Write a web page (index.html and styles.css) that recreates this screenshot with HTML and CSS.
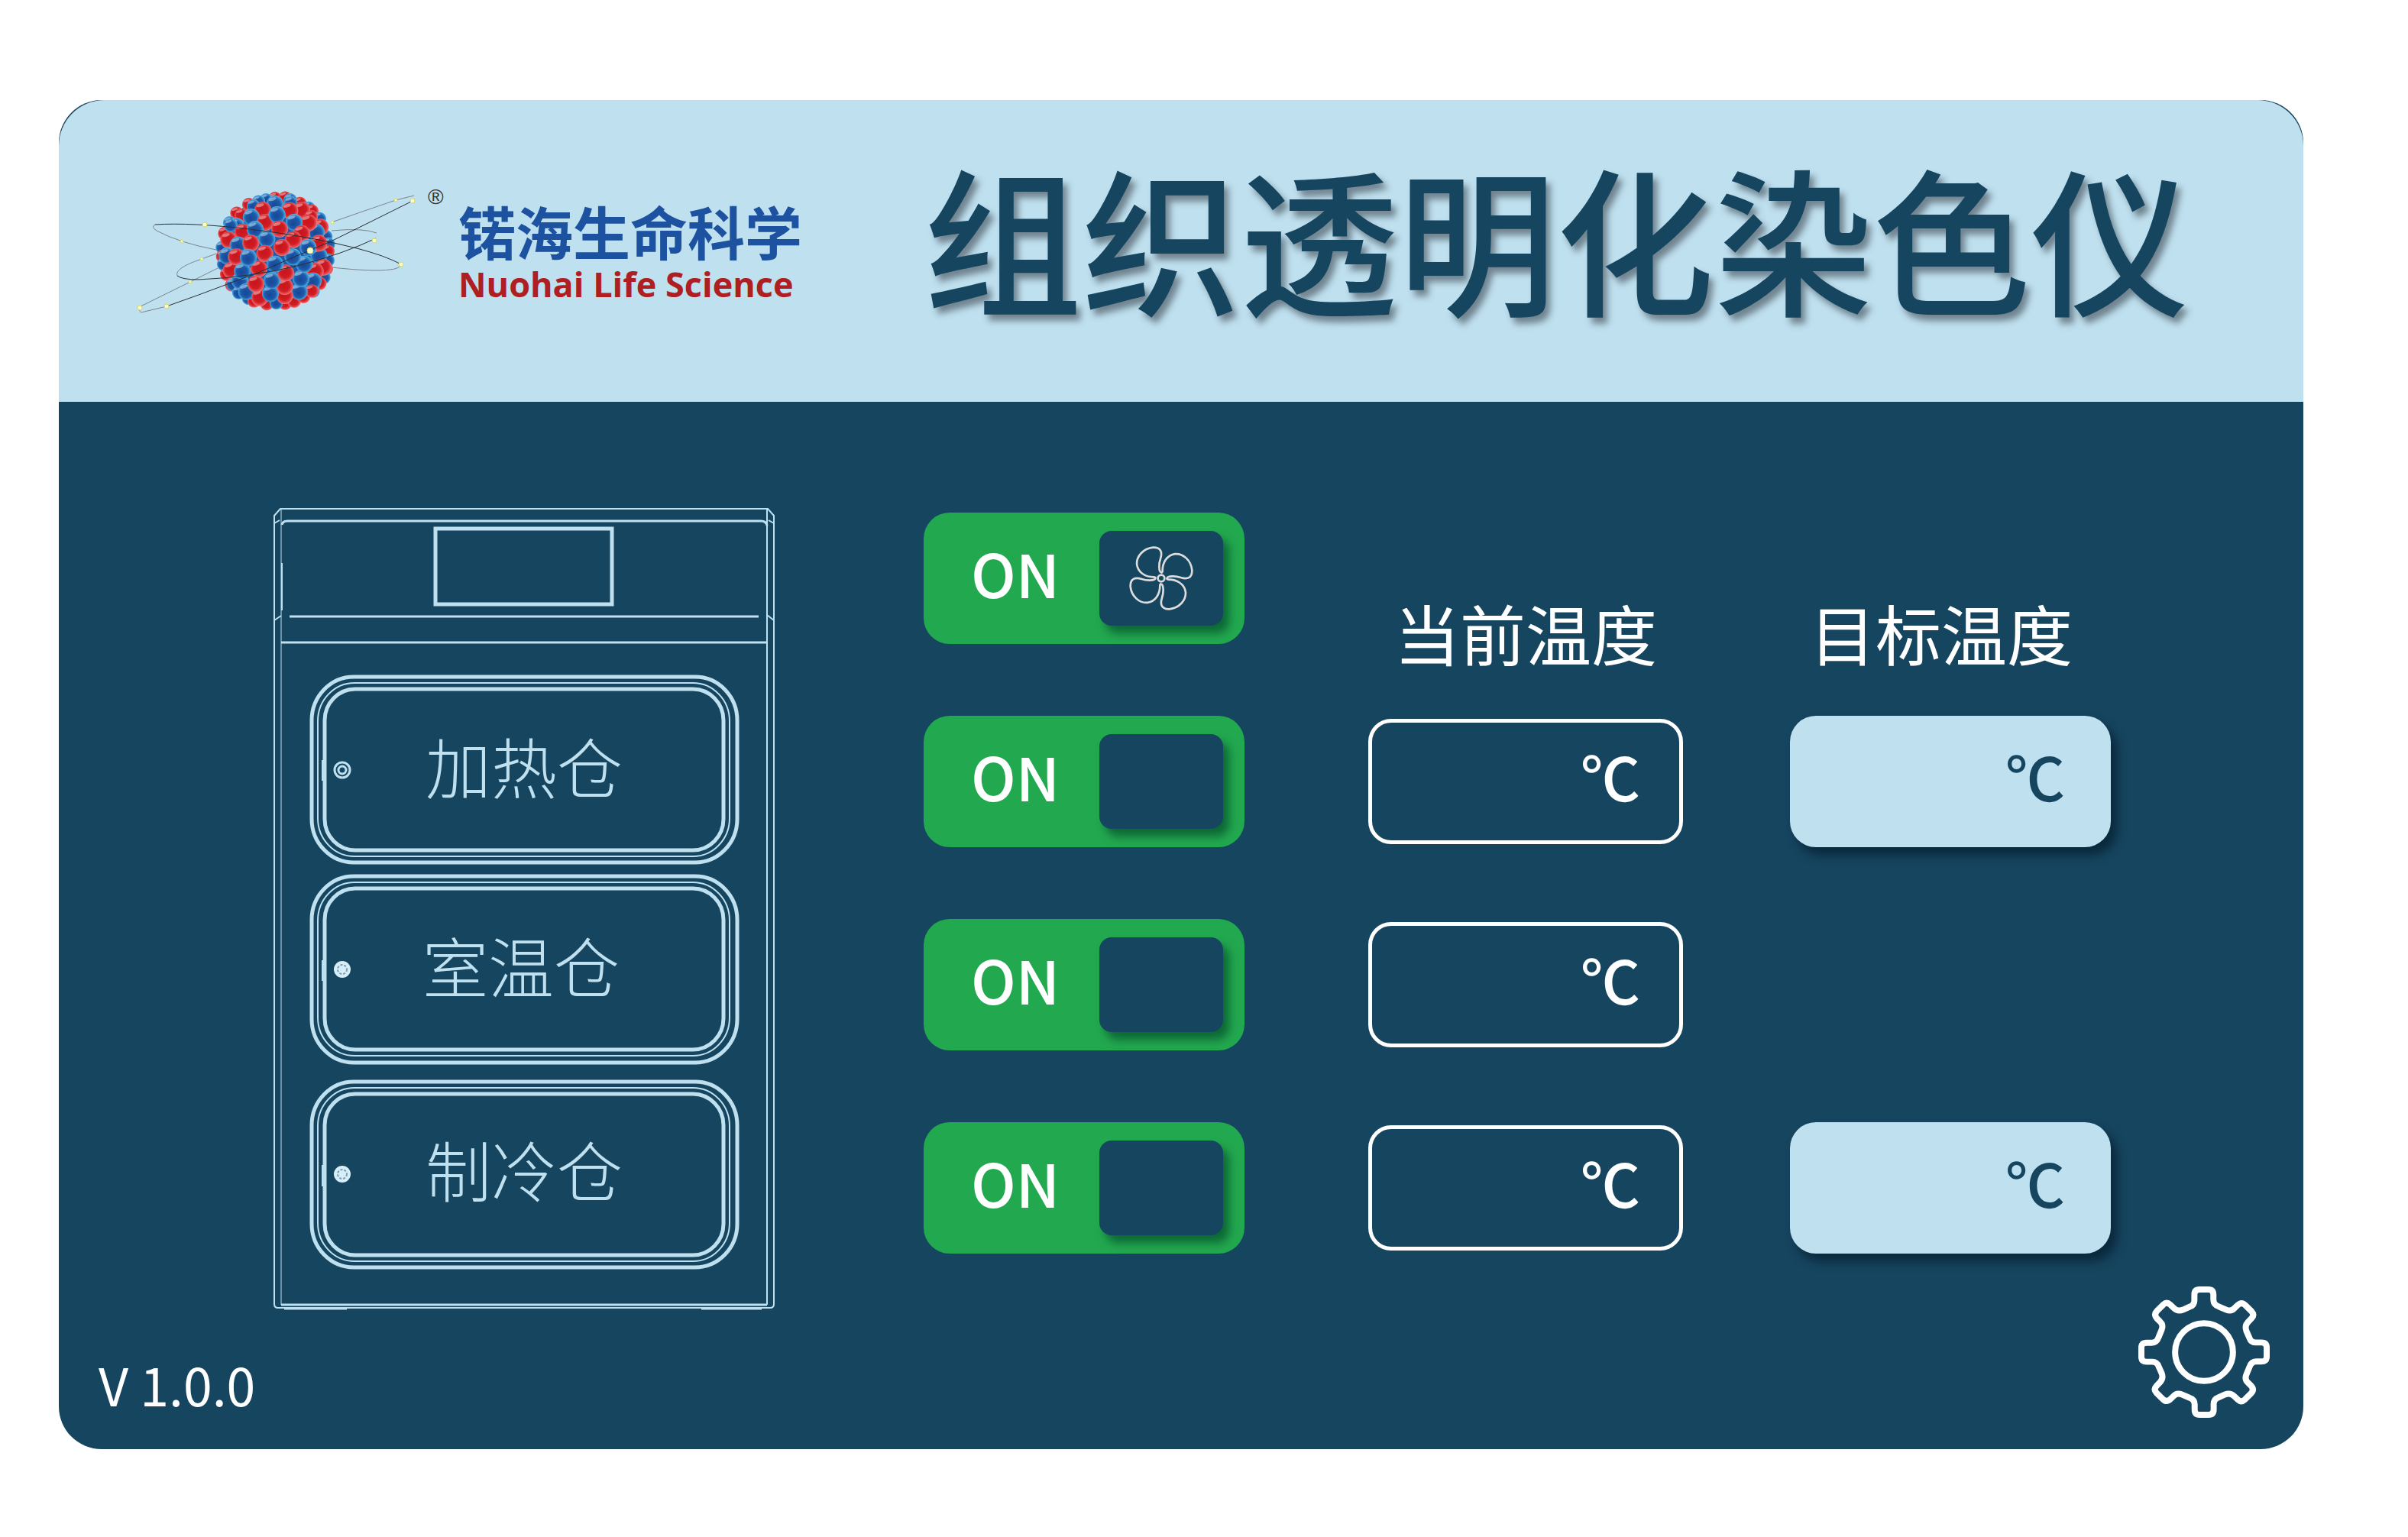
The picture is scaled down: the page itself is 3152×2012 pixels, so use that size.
FILE: index.html
```html
<!DOCTYPE html>
<html lang="zh-CN">
<head>
    <meta charset="utf-8">
    <title>组织透明化染色仪</title>
    <link rel="stylesheet" href="styles.css">
</head>
<body>
    <div class="panel">
        <header class="header">
            <div class="logo">
                <svg class="logo-atom" viewBox="180 235 410 190" aria-hidden="true">
                    <defs>
                        <radialGradient id="gradR" cx="0.5" cy="0.5" r="0.55" fx="0.42" fy="0.4">
                            <stop offset="0" stop-color="#c8141c"/>
                            <stop offset="0.6" stop-color="#cf1d24"/>
                            <stop offset="0.85" stop-color="#e8555a"/>
                            <stop offset="1" stop-color="#f4b9c0"/>
                        </radialGradient>
                        <radialGradient id="gradB" cx="0.5" cy="0.5" r="0.55" fx="0.45" fy="0.6">
                            <stop offset="0" stop-color="#1a4595"/>
                            <stop offset="0.6" stop-color="#1c5bab"/>
                            <stop offset="0.85" stop-color="#3f9bd6"/>
                            <stop offset="1" stop-color="#b4e0f2"/>
                        </radialGradient>
                        <g id="r"><circle r="33" fill="url(#gradR)"/><ellipse cx="-4" cy="-21" rx="15" ry="6" fill="#fff" opacity="0.4" transform="rotate(-18)"/></g>
                        <g id="b"><circle r="33" fill="url(#gradB)"/><ellipse cx="-4" cy="-21" rx="15" ry="6" fill="#fff" opacity="0.4" transform="rotate(-18)"/></g>
                        <g id="rs"><use href="#r" transform="scale(0.8)"/></g>
                        <g id="bs"><use href="#b" transform="scale(0.8)"/></g>
                    </defs>
                    <!-- orbits behind the nucleus -->
                    <g class="orbit orbit-back">
                        <path d="M203 295Q197 298 205 303Q235 319 283 328"/>
                        <path d="M285 352L249 370L184 402Q179 406 185 410L218 402"/>
                        <path d="M232 362Q228 352 264 340L283 333"/>
                        <path d="M434 292L480 276L518 263L542 257"/>
                        <path d="M434 303Q475 299 493 306"/>
                        <path d="M434 351Q490 357 510 354Q523 353 525 347"/>
                    </g>
                    <!-- nucleus -->
                    <g transform="translate(260 230) scale(0.3333)">
                        <circle cx="303" cy="297" r="212" fill="#1c5bab"/>
                        <use href="#rs" x="300" y="92"/><use href="#rs" x="340" y="90"/><use href="#bs" x="265" y="98"/><use href="#bs" x="235" y="105"/><use href="#bs" x="360" y="98"/>
                        <use href="#rs" x="197" y="116"/><use href="#rs" x="398" y="112"/><use href="#bs" x="432" y="130"/><use href="#rs" x="445" y="142"/><use href="#rs" x="150" y="150"/>
                        <use href="#bs" x="475" y="172"/><use href="#bs" x="122" y="188"/><use href="#rs" x="102" y="230"/><use href="#bs" x="500" y="242"/><use href="#bs" x="93" y="285"/>
                        <use href="#bs" x="510" y="272"/><use href="#rs" x="508" y="300"/><use href="#bs" x="508" y="335"/><use href="#rs" x="94" y="320"/><use href="#bs" x="98" y="350"/><use href="#rs" x="502" y="368"/>
                        <use href="#rs" x="110" y="390"/><use href="#bs" x="492" y="402"/><use href="#rs" x="130" y="432"/><use href="#bs" x="135" y="430"/><use href="#rs" x="476" y="426"/>
                        <use href="#bs" x="158" y="462"/><use href="#bs" x="450" y="456"/><use href="#bs" x="196" y="484"/><use href="#rs" x="218" y="495"/><use href="#rs" x="268" y="506"/>
                        <use href="#rs" x="340" y="504"/><use href="#rs" x="375" y="496"/><use href="#rs" x="412" y="478"/><use href="#bs" x="305" y="502"/>
                        <use href="#rs" x="168" y="158"/><use href="#bs" x="215" y="122"/><use href="#bs" x="362" y="110"/><use href="#b" x="300" y="114"/><use href="#r" x="252" y="138"/>
                        <use href="#r" x="405" y="138"/><use href="#r" x="358" y="140"/><use href="#rs" x="442" y="164"/><use href="#r" x="478" y="205"/><use href="#b" x="148" y="202"/><use href="#bs" x="126" y="198"/>
                        <use href="#b" x="462" y="224"/><use href="#r" x="118" y="255"/><use href="#r" x="173" y="224"/><use href="#b" x="112" y="318"/><use href="#b" x="472" y="315"/>
                        <use href="#r" x="128" y="374"/><use href="#r" x="490" y="362"/><use href="#r" x="458" y="378"/><use href="#b" x="450" y="416"/><use href="#b" x="162" y="416"/>
                        <use href="#b" x="188" y="458"/><use href="#r" x="240" y="482"/><use href="#rs" x="445" y="456"/>
                        <use href="#b" x="207" y="166"/><use href="#r" x="262" y="186"/><use href="#b" x="308" y="156"/><use href="#r" x="432" y="188"/><use href="#b" x="375" y="186"/>
                        <use href="#b" x="222" y="214"/><use href="#r" x="405" y="230"/><use href="#r" x="472" y="268"/><use href="#b" x="155" y="275"/><use href="#r" x="205" y="268"/>
                        <use href="#r" x="148" y="322"/><use href="#b" x="172" y="378"/><use href="#b" x="395" y="458"/><use href="#r" x="338" y="474"/><use href="#b" x="282" y="466"/>
                        <use href="#r" x="225" y="428"/><use href="#r" x="338" y="438"/><use href="#b" x="402" y="407"/><use href="#b" x="288" y="415"/><use href="#b" x="430" y="285"/>
                        <use href="#b" x="415" y="350"/><use href="#r" x="342" y="385"/><use href="#r" x="237" y="368"/><use href="#b" x="195" y="325"/><use href="#b" x="268" y="252"/>
                        <use href="#r" x="372" y="254"/><use href="#r" x="318" y="212"/><use href="#r" x="260" y="308"/><use href="#b" x="370" y="322"/><use href="#b" x="300" y="350"/><use href="#r" x="327" y="285"/>
                    </g>
                    <!-- orbits in front -->
                    <g class="orbit">
                        <path d="M203 295Q250 292 327 301T467 326Q505 336 525 347"/>
                        <path d="M540 264Q490 289 433 317Q385 337 340 357Q295 374 260 387L218 402"/>
                        <path d="M492 313Q450 333 393 348Q330 364 260 367Q238 367 232 362"/>
                    </g>
                    <g class="electrons">
                        <circle cx="268" cy="295" r="3"/>
                        <circle cx="238" cy="317" r="2"/>
                        <circle cx="264" cy="340" r="2"/>
                        <circle cx="249" cy="370" r="2"/>
                        <circle cx="218" cy="402" r="3"/>
                        <circle cx="183" cy="404" r="3"/>
                        <circle cx="435" cy="292" r="2"/>
                        <circle cx="518" cy="263" r="2"/>
                        <circle cx="540" cy="264" r="3"/>
                        <circle cx="490" cy="316" r="3"/>
                        <circle cx="525" cy="347" r="3"/>
                        <circle cx="406" cy="329" r="4"/>
                    </g>
                    <text class="logo-mark" x="560" y="268">®</text>
                </svg>
                <div class="brand">
                    <div class="brand-cn">锘海生命科学</div>
                    <div class="brand-en">Nuohai Life Science</div>
                </div>
            </div>
            <h1 class="title">组织透明化染色仪</h1>
        </header>

        <main class="main">
            <svg class="cabinet" viewBox="358 665 656 1050">
                <!-- shell -->
                <g class="line thin">
                    <path d="M367 666H1005L1013 675V1707Q1013 1712 1008 1712H364Q359 1712 359 1707V675Z"/>
                    <path d="M1004 666V1708M359 685L366 681M1013 685L1006 681M359 812L368 806M1013 812L1004 805"/>
                    <path class="faint" d="M368 666V1708"/>
                    <path d="M369 737V799"/>
                </g>
                <g class="line">
                    <path d="M369 687Q370 682 376 682H996Q1003 682 1004 688"/>
                    <path d="M379 807H993M368 841H1004M368 1708H1004"/>
                    <path d="M372 1713H454M918 1713H997"/>
                </g>
                <rect class="line screen" x="570" y="692" width="231" height="99"/>
                <!-- doors -->
                <g class="line door">
                    <rect x="408" y="886" width="557" height="243" rx="55" ry="57"/>
                    <rect class="thin" x="416" y="894" width="539" height="227" rx="48" ry="50"/>
                    <rect x="425" y="902" width="522" height="211" rx="40" ry="41"/>
                    <path class="thin" d="M422 995V1022"/>
                </g>
                <g class="line door">
                    <rect x="408" y="1147" width="557" height="244" rx="55" ry="57"/>
                    <rect class="thin" x="416" y="1155" width="539" height="227" rx="48" ry="50"/>
                    <rect x="425" y="1163" width="522" height="211" rx="40" ry="41"/>
                    <path class="thin" d="M422 1257V1284"/>
                </g>
                <g class="line door">
                    <rect x="408" y="1416" width="557" height="243" rx="55" ry="57"/>
                    <rect class="thin" x="416" y="1424" width="539" height="227" rx="48" ry="50"/>
                    <rect x="425" y="1432" width="522" height="211" rx="40" ry="41"/>
                    <path class="thin" d="M422 1525V1553"/>
                </g>
                <!-- locks -->
                <g class="line">
                    <circle cx="448" cy="1008" r="10"/>
                    <circle cx="448" cy="1008" r="5"/>
                </g>
                <g class="lock">
                    <circle cx="448" cy="1269" r="11"/>
                    <circle cx="448" cy="1537" r="11"/>
                    <circle class="lock-ring" cx="448" cy="1269" r="6"/>
                    <circle class="lock-ring" cx="448" cy="1537" r="6"/>
                </g>
                <g class="door-name">
                    <text x="686" y="1039">加热仓</text>
                    <text x="682" y="1300">室温仓</text>
                    <text x="686" y="1567">制冷仓</text>
                </g>
            </svg>

            <div class="controls">
                <div class="switches">
                    <button type="button" class="switch" aria-pressed="true">
                        <span class="switch-text">ON</span>
                        <span class="knob">
                            <svg class="fan" viewBox="115 106 250 250" aria-hidden="true">
                                <path id="blade" d="M240 209C230 205 230 175 237 155C245 130 240 110 208 111C170 115 143 145 145 177C150 210 180 226 210 226C216 226 218 228 218 231"/>
                                <use href="#blade" transform="rotate(90 240 231)"/>
                                <use href="#blade" transform="rotate(180 240 231)"/>
                                <use href="#blade" transform="rotate(270 240 231)"/>
                                <circle cx="240" cy="231" r="13"/>
                            </svg>
                        </span>
                    </button>
                    <button type="button" class="switch" aria-pressed="true">
                        <span class="switch-text">ON</span>
                        <span class="knob"></span>
                    </button>
                    <button type="button" class="switch" aria-pressed="true">
                        <span class="switch-text">ON</span>
                        <span class="knob"></span>
                    </button>
                    <button type="button" class="switch" aria-pressed="true">
                        <span class="switch-text">ON</span>
                        <span class="knob"></span>
                    </button>
                </div>

                <div class="temps">
                    <div class="temps-col">
                        <h2 class="temps-title" id="current">当前温度</h2>
                        <output class="current" aria-labelledby="current">℃</output>
                        <output class="current" aria-labelledby="current">℃</output>
                        <output class="current" aria-labelledby="current">℃</output>
                    </div>
                    <div class="temps-col">
                        <h2 class="temps-title temps-title-target" id="target">目标温度</h2>
                        <label class="target">
                            <input type="text" class="target-input" aria-labelledby="target">
                            <span>℃</span>
                        </label>
                        <div class="target-empty"></div>
                        <label class="target">
                            <input type="text" class="target-input" aria-labelledby="target">
                            <span>℃</span>
                        </label>
                    </div>
                </div>
            </div>
        </main>

        <footer class="footer">
            <span class="version">V 1.0.0</span>
            <button type="button" class="settings" aria-label="设置">
                <svg class="gear" viewBox="296 191 518 518" aria-hidden="true">
                    <path id="tooth" d="M555 203H537Q517 203 517 223V245Q517 265 499 271L472 283Q452 291 437 277L421 262Q408 250 395 262L370 287Q355 302 370 318L382 330Q396 343 388 362L376 391Q369 413 349 413H329Q308 413 308 433V450"/>
                    <use href="#tooth" transform="rotate(90 555 450)"/>
                    <use href="#tooth" transform="rotate(180 555 450)"/>
                    <use href="#tooth" transform="rotate(270 555 450)"/>
                    <circle cx="555" cy="450" r="114"/>
                </svg>
            </button>
        </footer>
    </div>
</body>
</html>
```
FILE: styles.css
```css
* {
    box-sizing: border-box;
}

body {
    margin: 0;
    padding: 131px 137px 115px 77px;
    background-color: white;
    font-family: "Noto Sans CJK SC", sans-serif;
}

button {
    border: none;
    padding: 0;
    background: none;
    font-family: inherit;
    cursor: pointer;
}

.panel {
    background-color: #16455f;
    border-radius: 56px;
    color: white;
}

/* header */
.header {
    display: flex;
    justify-content: space-between;
    align-items: center;
    height: 395px;
    padding: 0 150px 0 103px;
    background-color: #bfe0ef;
    border-radius: 60px 60px 0 0;
}

.logo {
    display: flex;
    align-items: center;
    gap: 10px;
}

.logo-atom {
    width: 410px;
    height: 190px;
}

.orbit path {
    fill: none;
    stroke: #2a2f36;
    stroke-width: 1;
}

.orbit-back path {
    stroke: #7d858c;
}

.electrons circle {
    fill: #fbfbd0;
    stroke: #d8d860;
    stroke-width: 1;
}

.logo-mark {
    font-family: "Liberation Sans", sans-serif;
    font-size: 28px;
    fill: #333;
}

.brand {
    padding-top: 6px;
}

.brand-cn {
    font-size: 75px;
    line-height: 80px;
    font-weight: 700;
    color: #1c52a0;
}

.brand-en {
    font-family: "Open Sans", sans-serif;
    font-size: 45px;
    line-height: 60px;
    font-weight: 700;
    color: #ae1e23;
}

.title {
    margin: 0 0 42px;
    font-size: 207px;
    line-height: 208px;
    font-weight: 500;
    color: #16455f;
    text-shadow: 6px 8px 8px rgba(60, 70, 80, 0.6);
}

/* content */
.main {
    display: flex;
    justify-content: space-between;
    align-items: flex-start;
    padding: 139px 252px 0 281px;
}

.cabinet {
    width: 656px;
    height: 1050px;
}

.line {
    fill: none;
    stroke: #bfe0ef;
    stroke-width: 3;
}

.thin {
    stroke-width: 2;
}

.faint {
    opacity: 0.5;
}

.screen {
    stroke-width: 5;
}

.door {
    stroke-width: 5;
}

.lock {
    fill: #d8edf6;
}

.lock-ring {
    fill: none;
    stroke: #6fa3bd;
    stroke-width: 2;
    stroke-dasharray: 3 2;
}

.door-name {
    font-size: 86px;
    font-weight: 300;
    fill: #bfe0ef;
    text-anchor: middle;
}

.controls {
    display: flex;
    gap: 162px;
    margin-top: 6px;
}

.switches,
.temps-col {
    display: flex;
    flex-direction: column;
    align-items: center;
    gap: 94px;
}

.switch {
    display: flex;
    justify-content: space-between;
    align-items: center;
    width: 420px;
    height: 172px;
    padding: 0 28px 0 62px;
    background-color: #22a84f;
    border-radius: 34px;
    color: white;
}

.switch-text {
    padding-bottom: 16px;
    font-size: 78px;
    line-height: 100px;
    font-weight: 500;
}

.knob {
    display: flex;
    justify-content: center;
    align-items: center;
    width: 162px;
    height: 124px;
    background-color: #16455f;
    border-radius: 16px;
    box-shadow: 8px 10px 12px rgba(0, 70, 40, 0.65);
}

.fan {
    width: 84px;
    height: 84px;
    fill: none;
    stroke: #dcdcdc;
    stroke-width: 8;
}

.temps {
    display: flex;
    gap: 140px;
    padding-top: 114px;
}

.temps-title {
    margin: 0 0 -28px;
    font-size: 86px;
    line-height: 86px;
    font-weight: 400;
}

.temps-title-target {
    padding-right: 24px;
}

.current,
.target {
    display: flex;
    justify-content: flex-end;
    align-items: center;
    font-size: 78px;
    line-height: 100px;
    font-weight: 500;
}

.current {
    width: 412px;
    height: 164px;
    margin: 4px 0;
    padding: 0 51px 16px 0;
    border: 5px solid white;
    border-radius: 30px;
}

.target {
    width: 420px;
    height: 172px;
    padding: 0 60px 16px 0;
    background-color: #bfe0ef;
    border-radius: 34px;
    color: #16455f;
    box-shadow: 8px 10px 14px rgba(0, 20, 35, 0.6);
}

.target-input {
    flex: 1;
    min-width: 0;
    border: none;
    outline: none;
    background: none;
    font: inherit;
    color: inherit;
    text-align: right;
}

.target-empty {
    height: 172px;
}

/* footer */
.footer {
    display: flex;
    justify-content: space-between;
    align-items: flex-end;
    margin-top: -31px;
    padding: 0 44px 41px 52px;
}

.version {
    padding-bottom: 4px;
    font-size: 68px;
    line-height: 80px;
    font-weight: 400;
}

.settings {
    width: 172px;
    height: 172px;
    color: white;
}

.gear {
    display: block;
    width: 172px;
    height: 172px;
    fill: none;
    stroke: currentColor;
    stroke-width: 24;
}
```
